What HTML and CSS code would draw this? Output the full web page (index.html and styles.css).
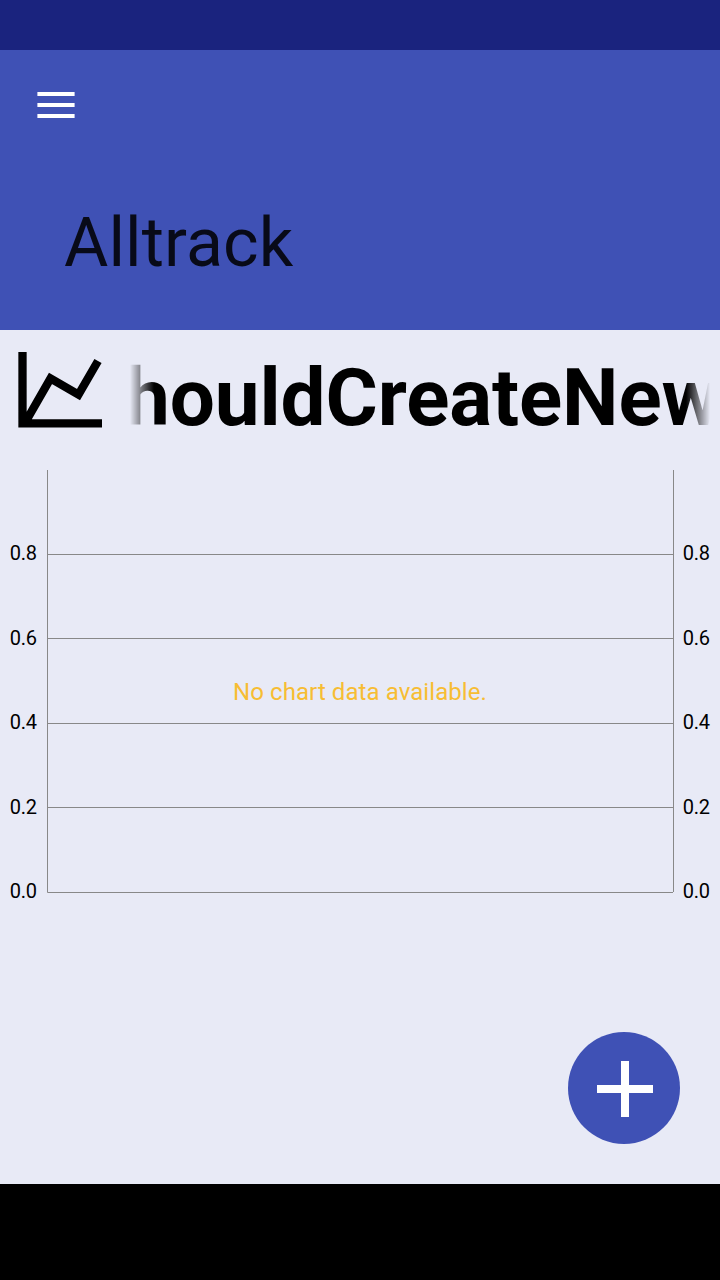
FILE: index.html
```html
<!DOCTYPE html>
<html lang="en">
<head>
<meta charset="utf-8">
<title>Alltrack</title>
<link rel="stylesheet" href="styles.css">
</head>
<body>
<div class="screen">
  <div class="status-bar"></div>
  <header class="app-bar">
    <svg class="menu-icon" width="38" height="26" viewBox="0 0 38 26"><path d="M.4 0h37.2v4H.4zM.4 11h37.2v4H.4zM.4 22h37.2v4H.4z" fill="#fff"/></svg>
    <h1 class="app-title">Alltrack</h1>
  </header>
  <main class="content">
    <section class="graph-head">
      <svg class="graph-icon" width="84" height="76" viewBox="0 0 84 76"><path d="M4.500 0V71.300H84M7.500 70L32.500 26.500L60.500 42.500L80 9" fill="none" stroke="#000" stroke-width="8.300"/></svg>
      <div class="marquee"><span class="marquee-text">shouldCreateNew</span></div>
    </section>
    <svg class="chart" width="720" height="440" viewBox="0 0 720 440">
      <g class="grid-lines">
        <path d="M47.500 0V422.500H673M673.500 0V422M47 84.500H673M47 168.500H673M47 253.500H673M47 337.500H673"/>
      </g>
      <g class="axis">
        <text x="9.700" y="90">0.8</text><text x="9.700" y="175">0.6</text><text x="9.700" y="259">0.4</text><text x="9.700" y="344">0.2</text><text x="9.700" y="428">0.0</text>
      </g>
      <g class="axis">
        <text x="682.700" y="90">0.8</text><text x="682.700" y="175">0.6</text><text x="682.700" y="259">0.4</text><text x="682.700" y="344">0.2</text><text x="682.700" y="428">0.0</text>
      </g>
      <text class="no-data" x="360" y="230">No chart data available.</text>
    </svg>
    <button class="fab" aria-label="Add">
      <svg width="56" height="56" viewBox="0 0 56 56"><path d="M24 0h8v24h24v8H32v24h-8V32H0v-8h24z" fill="#fff"/></svg>
    </button>
  </main>
  <div class="nav-bar"></div>
</div>
</body>
</html>
```
FILE: styles.css
```css
* { box-sizing: border-box; }
body { margin: 0; font-family: Roboto, sans-serif; }
.screen { width: 720px; height: 1280px; display: flex; flex-direction: column; overflow: hidden; }
.status-bar { height: 50px; background: #1a237e; }
.app-bar { height: 280px; padding: 42px 0 0 37px; background: #3f51b5; }
.menu-icon { display: block; }
.app-title { margin: 85px 0 0 27px; font-size: 68px; line-height: 80px; font-weight: 400; letter-spacing: .1px; color: rgba(0, 0, 0, .87); }
.content { height: 854px; background: #e8eaf6; display: flex; flex-direction: column; }
.graph-head { height: 140px; padding: 22px 10px 0 18px; display: flex; align-items: flex-start; }
.graph-icon { flex: none; }
.marquee { flex: none; width: 580px; height: 92px; margin-left: 28px; overflow: hidden; -webkit-mask-image: linear-gradient(90deg, transparent, #000 24px, #000 556px, transparent); mask-image: linear-gradient(90deg, transparent, #000 24px, #000 556px, transparent); }
.marquee-text { display: block; margin-left: -46px; font-size: 80px; line-height: 92px; font-weight: 700; letter-spacing: -.1px; color: #000; white-space: nowrap; }
.chart { display: block; flex: none; }
.grid-lines { fill: none; stroke: #888; stroke-width: 1; }
.axis { font-size: 20px; letter-spacing: -.2px; fill: #000; }
.no-data { font-size: 24px; letter-spacing: .08px; fill: #f7bd33; text-anchor: middle; }
.fab { align-self: flex-end; width: 112px; height: 112px; margin: 122px 40px 0 0; padding: 2px 0 0 2px; border: 0; border-radius: 50%; background: #3f51b5; display: flex; align-items: center; justify-content: center; }
.nav-bar { height: 96px; background: #000; }
```
